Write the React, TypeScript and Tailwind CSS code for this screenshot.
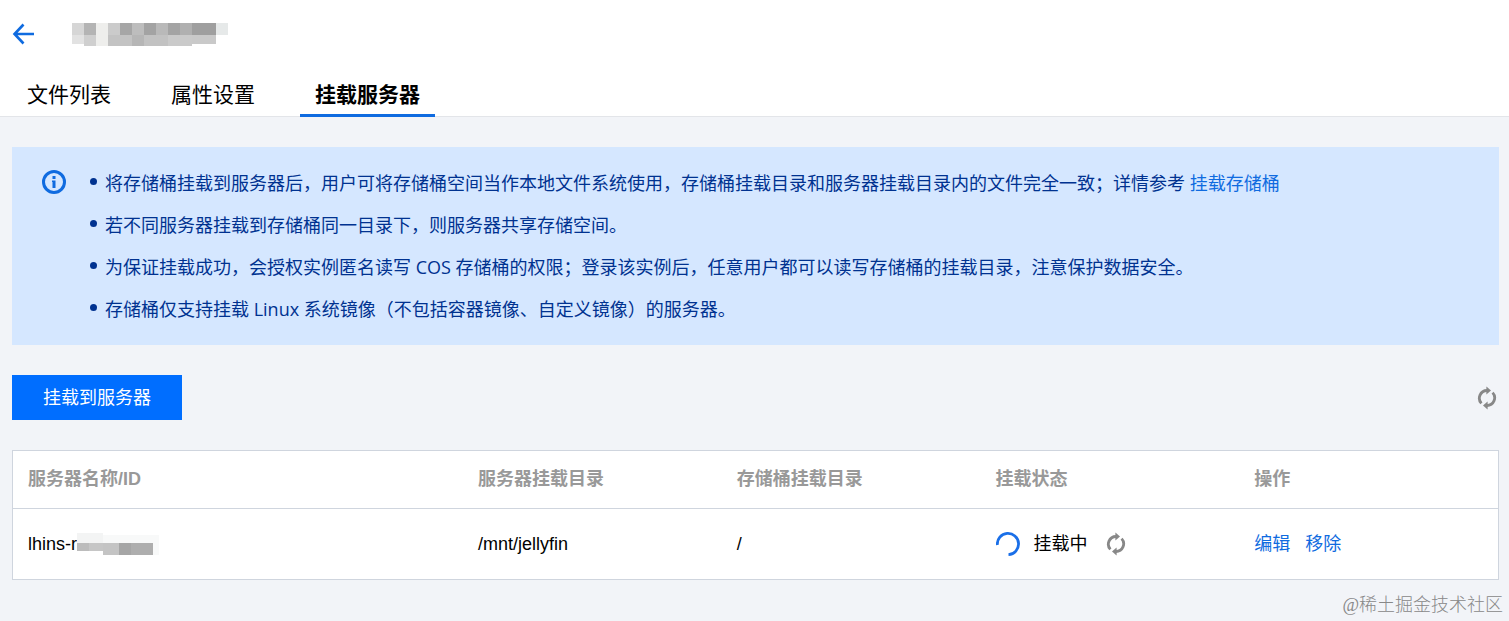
const NOTES = [
  '若不同服务器挂载到存储桶同一目录下，则服务器共享存储空间。',
  '为保证挂载成功，会授权实例匿名读写 COS 存储桶的权限；登录该实例后，任意用户都可以读写存储桶的挂载目录，注意保护数据安全。',
  '存储桶仅支持挂载 Linux 系统镜像（不包括容器镜像、自定义镜像）的服务器。',
];

const COLUMNS = ['服务器名称/ID', '服务器挂载目录', '存储桶挂载目录', '挂载状态', '操作'];

type Block = { x: number; y: number; w: number; h: number; fill: string };

const TITLE_BLOCKS: Block[] = [
  { x: 0, y: 0, w: 12, h: 12, fill: '#d6d6d6' },
  { x: 12, y: 0, w: 12, h: 12, fill: '#b4b4b4' },
  { x: 24, y: 0, w: 12, h: 12, fill: '#eeeeec' },
  { x: 36, y: 0, w: 12, h: 12, fill: '#cbcbcb' },
  { x: 48, y: 0, w: 12, h: 12, fill: '#a6a6a6' },
  { x: 60, y: 0, w: 12, h: 12, fill: '#bdbdbd' },
  { x: 72, y: 0, w: 12, h: 12, fill: '#a3a3a3' },
  { x: 84, y: 0, w: 12, h: 12, fill: '#b9b9b9' },
  { x: 96, y: 0, w: 12, h: 12, fill: '#a4a4a4' },
  { x: 108, y: 0, w: 12, h: 12, fill: '#b0b0b0' },
  { x: 120, y: 0, w: 24, h: 12, fill: '#9f9f9f' },
  { x: 144, y: 0, w: 12, h: 12, fill: '#e6e9e9' },
  { x: 0, y: 12, w: 12, h: 9, fill: '#e2e2e2' },
  { x: 12, y: 12, w: 12, h: 11, fill: '#cfcfcf' },
  { x: 24, y: 12, w: 12, h: 11, fill: '#eeeeec' },
  { x: 36, y: 12, w: 24, h: 11, fill: '#c3c3c3' },
  { x: 60, y: 12, w: 12, h: 11, fill: '#b6b6b6' },
  { x: 72, y: 12, w: 24, h: 11, fill: '#c2c2c2' },
  { x: 96, y: 12, w: 24, h: 11, fill: '#cacaca' },
  { x: 120, y: 12, w: 24, h: 9, fill: '#c9c9c9' },
];

const ID_BLOCKS: Block[] = [
  { x: 0, y: 0, w: 26, h: 10, fill: '#f3f4f4' },
  { x: 26, y: 2, w: 56, h: 20, fill: '#f8f9f9' },
  { x: 0, y: 10, w: 12, h: 8, fill: '#bcbcbc' },
  { x: 12, y: 10, w: 14, h: 8, fill: '#c6c6c6' },
  { x: 26, y: 10, w: 16, h: 12, fill: '#c4c4c4' },
  { x: 42, y: 10, w: 12, h: 12, fill: '#a6a6a6' },
  { x: 54, y: 10, w: 22, h: 12, fill: '#aeaeae' },
];

function Mosaic({ blocks, className, viewBox }: { blocks: Block[]; className: string; viewBox: string }) {
  return (
    <svg className={className} viewBox={viewBox} shapeRendering="crispEdges" aria-hidden="true">
      {blocks.map((b, i) => (
        <rect key={i} x={b.x} y={b.y} width={b.w} height={b.h} fill={b.fill} />
      ))}
    </svg>
  );
}

function RefreshIcon() {
  return (
    <svg className="h-6 w-5" viewBox="0 0 20 24" fill="none" aria-hidden="true">
      <path d="M4.4 17.4A7.7 7.7 0 0 1 10 4.5" stroke="#888" strokeWidth="2.8" />
      <path d="M15.6 6.6A7.7 7.7 0 0 1 10 19.5" stroke="#888" strokeWidth="2.8" />
      <path d="M9.4 0.6 14 4.5 9.4 8.4z" fill="#888" />
      <path d="M10.6 15.6 6 19.5l4.6 3.9z" fill="#888" />
    </svg>
  );
}

export default function App() {
  return (
    <div className="min-h-screen bg-[#f2f4f8] font-['Liberation_Sans','Noto_Sans_CJK_SC',sans-serif] text-lg leading-6 font-normal text-black">
      <header className="border-b border-[#e3e5e9] bg-white">
        <div className="flex h-[72px] items-center gap-9 px-3 pb-1">
          <button type="button" aria-label="返回">
            <svg className="h-6 w-6" viewBox="0 0 24 24" fill="none" stroke="#0f6be0" strokeWidth="2.6" aria-hidden="true">
              <path d="M11.5 2.5 2.5 12l9 9.5M2.5 12H22" />
            </svg>
          </button>
          <Mosaic blocks={TITLE_BLOCKS} className="h-[23px] w-[156px]" viewBox="0 0 156 23" />
        </div>
        <nav className="-mb-px flex h-[45px] gap-[30px] px-3 text-[21px]">
          <a href="#files" className="px-[15px] pt-[11px]">文件列表</a>
          <a href="#settings" className="px-[15px] pt-[11px]">属性设置</a>
          <a href="#mount" aria-current="page" className="border-b-3 border-[#0f6be0] px-[15px] pt-[11px] font-bold">挂载服务器</a>
        </nav>
      </header>

      <main className="pt-[30px] pr-[10px] pl-3">
        <section className="flex gap-6 bg-[#d5e7ff] px-[30px] py-[15px] text-[#003290]">
          <svg className="mt-2 h-6 w-6 shrink-0" viewBox="0 0 24 24" aria-hidden="true">
            <circle cx="12" cy="12" r="10.5" fill="none" stroke="#0f6be0" strokeWidth="3" />
            <path d="M10.5 6h3v3h-3zM10 10.5h3.5V18h-3v-6H10z" fill="#0f6be0" />
          </svg>
          <ul className="font-['Open_Sans','Noto_Sans_CJK_SC',sans-serif] leading-[42px]">
            <li className="flex gap-2">
              <span className="mt-4 h-[7px] w-[7px] shrink-0 rounded-full bg-[#003290]" />
              <span>
                将存储桶挂载到服务器后，用户可将存储桶空间当作本地文件系统使用，存储桶挂载目录和服务器挂载目录内的文件完全一致；详情参考{' '}
                <a href="#guide" className="text-[#0f6be0]">挂载存储桶</a>
              </span>
            </li>
            {NOTES.map((note) => (
              <li key={note} className="flex gap-2">
                <span className="mt-4 h-[7px] w-[7px] shrink-0 rounded-full bg-[#003290]" />
                <span>{note}</span>
              </li>
            ))}
          </ul>
        </section>

        <div className="flex items-center justify-between py-[30px]">
          <button type="button" className="h-[45px] bg-[#006eff] px-[31px] text-white">挂载到服务器</button>
          <button type="button" aria-label="刷新列表" className="mr-[2px]">
            <RefreshIcon />
          </button>
        </div>

        <div className="border border-[#cfd5de] bg-white">
          <table className="w-full table-fixed border-collapse text-left">
            <thead>
              <tr className="h-[57px] border-b border-[#cfd5de] text-[#999]">
                {COLUMNS.map((label) => (
                  <th key={label} scope="col" className="px-[15px] font-bold first:w-[450px]">{label}</th>
                ))}
              </tr>
            </thead>
            <tbody>
              <tr className="h-[71px]">
                <td className="px-[15px]">
                  <div className="flex items-center">
                    lhins-r
                    <Mosaic blocks={ID_BLOCKS} className="h-[22px] w-[82px]" viewBox="0 0 82 22" />
                  </div>
                </td>
                <td className="px-[15px]">/mnt/jellyfin</td>
                <td className="px-[15px]">/</td>
                <td className="px-[15px]">
                  <div className="flex items-center">
                    <svg className="mr-[14px] h-6 w-6" viewBox="0 0 24 24" fill="none" stroke="#1a6fe8" strokeWidth="2.8" aria-hidden="true">
                      <path d="M1.4 13A10.6 10.6 0 1 1 12.5 22.6" />
                    </svg>
                    挂载中
                    <button type="button" aria-label="刷新状态" className="ml-[18px]">
                      <RefreshIcon />
                    </button>
                  </div>
                </td>
                <td className="px-[15px]">
                  <div className="flex gap-[15px] text-[#0f6be0]">
                    <a href="#edit">编辑</a>
                    <a href="#remove">移除</a>
                  </div>
                </td>
              </tr>
            </tbody>
          </table>
        </div>
        <footer className="-mr-1 pt-[13px] text-right font-['Liberation_Serif','Noto_Sans_CJK_SC',serif] font-light text-[#888]">@稀土掘金技术社区</footer>
      </main>
    </div>
  );
}
